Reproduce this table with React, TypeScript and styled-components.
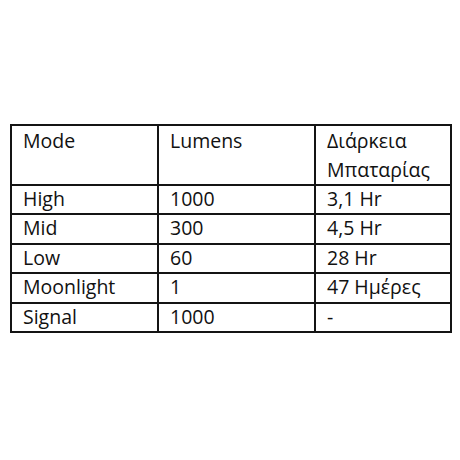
import styled, { createGlobalStyle } from 'styled-components';

const GlobalStyle = createGlobalStyle`
  html, body {
    margin: 0;
    padding: 0;
    background: #ffffff;
  }
`;

const rows = [
  ['High', '1000', '3,1 Hr'],
  ['Mid', '300', '4,5 Hr'],
  ['Low', '60', '28 Hr'],
  ['Moonlight', '1', '47 Ημέρες'],
  ['Signal', '1000', '-'],
];

const App = () => {
  return (
    <Page>
      <GlobalStyle />
      <Table>
        <colgroup>
          <col style={{ width: 147 }} />
          <col style={{ width: 157 }} />
          <col style={{ width: 136 }} />
        </colgroup>
        <tbody>
          <Row $head>
            <Cell $head>Mode</Cell>
            <Cell $head>Lumens</Cell>
            <Cell $head>
              Διάρκεια
              <br />
              Μπαταρίας
            </Cell>
          </Row>
          {rows.map((r) => (
            <Row key={r[0]}>
              {r.map((c, i) => (
                <Cell key={i}>{c}</Cell>
              ))}
            </Row>
          ))}
        </tbody>
      </Table>
    </Page>
  );
};

const Page = styled.div`
  width: 460px;
  height: 460px;
  padding: 124px 0 0 10px;
  box-sizing: border-box;
`;

const Table = styled.table`
  border-collapse: collapse;
  table-layout: fixed;
  width: 440px;
  font-family: 'Open Sans', 'Noto Sans', sans-serif;
  font-size: 19.5px;
  color: #111111;
`;

const Row = styled.tr<{ $head?: boolean }>`
  height: ${({ $head }) => ($head ? '56.5px' : '29.4px')};
`;

const Cell = styled.td<{ $head?: boolean }>`
  border: 2px solid #141414;
  padding: 0 11px;
  line-height: ${({ $head }) => ($head ? '29px' : '26px')};
  vertical-align: top;
  white-space: nowrap;
`;

export default App;
